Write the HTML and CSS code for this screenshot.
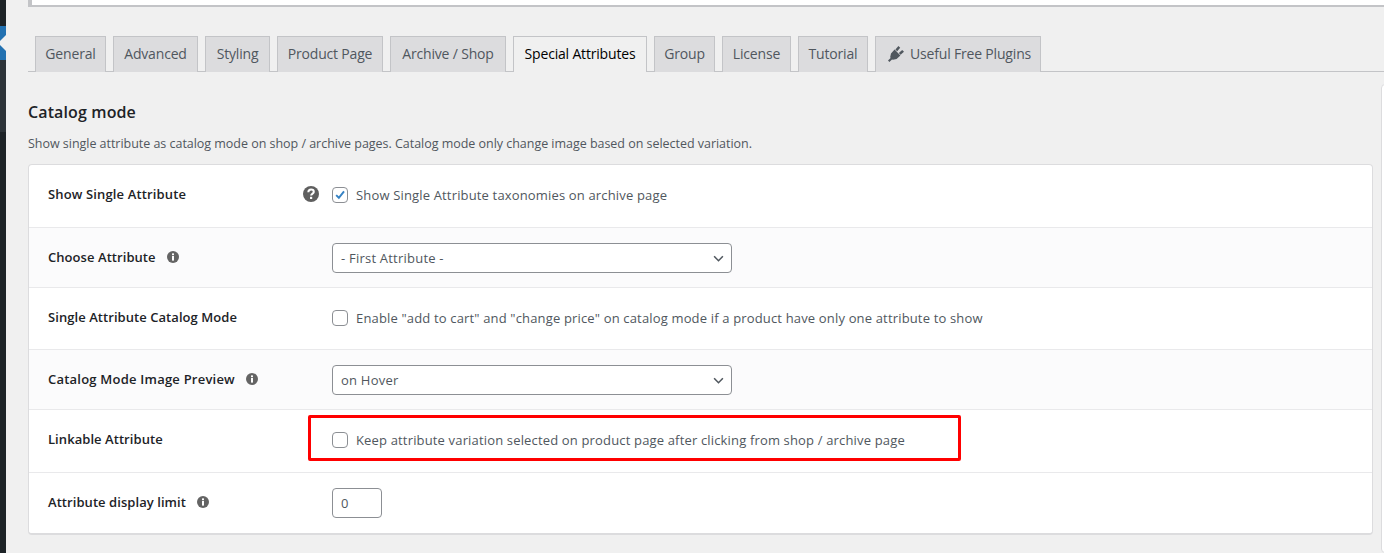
FILE: index.html
```html
<!DOCTYPE html>
<html lang="en">
<head>
<meta charset="utf-8">
<title>Catalog mode</title>
<link rel="stylesheet" href="styles.css">
</head>
<body>
<div class="shell">
  <aside class="adminbar">
    <div class="menu-top"></div>
    <div class="menu-current"><span class="notch"></span></div>
    <div class="menu-sub"></div>
  </aside>
  <main class="content">
    <div class="notice"></div>
    <nav class="tabs">
      <a class="tab tab-general"><span class="tab-text">General</span></a>
      <a class="tab tab-advanced"><span class="tab-text">Advanced</span></a>
      <a class="tab tab-styling"><span class="tab-text">Styling</span></a>
      <a class="tab tab-product"><span class="tab-text">Product Page</span></a>
      <a class="tab tab-archive"><span class="tab-text">Archive / Shop</span></a>
      <a class="tab tab-special active"><span class="tab-text">Special Attributes</span></a>
      <a class="tab tab-group"><span class="tab-text">Group</span></a>
      <a class="tab tab-license"><span class="tab-text">License</span></a>
      <a class="tab tab-tutorial"><span class="tab-text">Tutorial</span></a>
      <a class="tab tab-plugins">
        <svg class="plug" viewBox="0 0 16 16" aria-hidden="true"><path d="M0 14.6 2.6 12 2.2 11 3 7.4 6.6 3.6 12.4 9.4 8.6 13 5 13.8 4 13.4 1.4 16Z"/><path d="M7.4 3.4 10.4 0 12.2 1.8 9.2 5.2Z"/><path d="M10.8 7 14.2 4 16 5.8 12.6 8.8Z"/></svg>
        <span class="tab-text">Useful Free Plugins</span>
      </a>
    </nav>
    <h2 class="section-title">Catalog mode</h2>
    <p class="section-desc">Show single attribute as catalog mode on shop / archive pages. Catalog mode only change image based on selected variation.</p>
    <section class="card">
      <div class="row row-a">
        <div class="label">Show Single Attribute
          <svg class="help" viewBox="0 0 16 16" aria-hidden="true"><circle cx="8" cy="8" r="8"/><path class="glyph-line" d="M5.3 6.2C5.4 4.5 6.6 3.6 8.1 3.6 9.7 3.6 10.8 4.6 10.8 5.9 10.8 7.5 8.1 7.7 8.1 9.6"/><rect class="glyph" x="7" y="10.8" width="2.2" height="2.2"/></svg>
        </div>
        <label class="check"><span class="box"><svg viewBox="0 0 16 16" aria-hidden="true"><path class="tick" d="M3.6 8.2 6.7 11.2 12.6 3.8"/></svg></span>Show Single Attribute taxonomies on archive page</label>
      </div>
      <div class="row row-b alt">
        <div class="label label-tight">Choose Attribute <svg class="info" viewBox="0 0 12 12" aria-hidden="true"><circle cx="6" cy="6" r="6"/><rect class="glyph" x="5" y="2.4" width="2" height="1.8"/><rect class="glyph" x="5" y="5" width="2" height="4.6"/></svg></div>
        <div class="select-wrap">
          <select class="select"><option>- First Attribute -</option></select>
          <svg class="chev" viewBox="0 0 12 8" aria-hidden="true"><path d="M1 1.5 6 6.5 11 1.5"/></svg>
        </div>
      </div>
      <div class="row row-c">
        <div class="label label-tight">Single Attribute Catalog Mode</div>
        <label class="check"><span class="box"></span>Enable "add to cart" and "change price" on catalog mode if a product have only one attribute to show</label>
      </div>
      <div class="row row-b alt">
        <div class="label label-wide">Catalog Mode Image Preview <svg class="info" viewBox="0 0 12 12" aria-hidden="true"><circle cx="6" cy="6" r="6"/><rect class="glyph" x="5" y="2.4" width="2" height="1.8"/><rect class="glyph" x="5" y="5" width="2" height="4.6"/></svg></div>
        <div class="select-wrap">
          <select class="select"><option>on Hover</option></select>
          <svg class="chev" viewBox="0 0 12 8" aria-hidden="true"><path d="M1 1.5 6 6.5 11 1.5"/></svg>
        </div>
      </div>
      <div class="row row-a highlight-row">
        <div class="label label-tight">Linkable Attribute</div>
        <label class="check"><span class="box"></span>Keep attribute variation selected on product page after clicking from shop / archive page</label>
        <div class="highlight"></div>
      </div>
      <div class="row row-last">
        <div class="label label-tight">Attribute display limit <svg class="info" viewBox="0 0 12 12" aria-hidden="true"><circle cx="6" cy="6" r="6"/><rect class="glyph" x="5" y="2.4" width="2" height="1.8"/><rect class="glyph" x="5" y="5" width="2" height="4.6"/></svg></div>
        <input class="number" type="text" value="0">
      </div>
    </section>
  </main>
  <div class="side-card"></div>
</div>
</body>
</html>
```
FILE: styles.css
```css
* { box-sizing: border-box; }
html, body { margin: 0; height: 100%; overflow: hidden; }
body {
  background: #f0f0f0;
  color: #3c434a;
  font-family: "Open Sans", "Noto Sans", "Liberation Sans", sans-serif;
  font-size: 13px;
}
.shell { display: flex; height: 553px; width: 1384px; overflow: hidden; position: relative; }
.adminbar { width: 6px; flex: none; background: #1d2327; display: flex; flex-direction: column; }
.menu-top { height: 26px; }
.menu-current { height: 34px; background: #2271b1; position: relative; }
.notch {
  position: absolute; right: 0; top: 9px; width: 0; height: 0;
  border-style: solid; border-color: transparent #f0f0f0 transparent transparent;
  border-width: 8px 8px 8px 0;
}
.menu-sub { height: 72px; background: #2c3338; }
.content { flex: none; width: 1367px; margin-left: 22px; }
.notice {
  height: 7px; margin-right: -20px;
  background: #fff;
  border-left: 4px solid #c3c4c7;
  border-bottom: 2px solid #c3c4c7;
}
.tabs {
  display: flex; gap: 7px; height: 65px; padding: 29px 0 0 7px; margin-right: -20px;
  border-bottom: 1px solid #c3c4c7;
}
.tab {
  display: flex; align-items: center; justify-content: center; height: 36px; padding-bottom: 2px;
  background: #dcdcde; border: 1px solid #c3c4c7; border-bottom: 0;
  color: #50575e; font-size: 14px; font-weight: 500; white-space: nowrap; letter-spacing: -0.18px;
}
.tab.active { background: #f0f0f0; color: #000; position: relative; }
.tab-general { width: 71px; }
.tab-advanced { width: 85px; }
.tab-styling { width: 65px; }
.tab-product { width: 106px; }
.tab-archive { width: 116px; }
.tab-special { width: 134px; }
.tab-group { width: 61px; }
.tab-license { width: 69px; }
.tab-tutorial { width: 70px; }
.tab-plugins { width: 166px; gap: 6px; justify-content: flex-start; padding-left: 12px; }
.plug { width: 16px; height: 16px; fill: #50575e; flex: none; }
.section-title { margin: 28px 0 0; font-size: 16px; line-height: 24px; font-weight: 600; color: #1d2327; letter-spacing: 0.12px; }
.section-desc { margin: 11px 0 0; font-size: 12.5px; line-height: 18px; color: #50575e; letter-spacing: -0.03px; }
.card {
  margin-top: 11px; width: 1345px;
  background: #fff; border: 1px solid #dcdcde; border-radius: 4px;
  border-bottom-width: 2px;
}
.row {
  display: grid; grid-template-columns: 284px 1fr; align-items: center;
  padding: 0 19px; border-bottom: 1px solid #e9e9eb; position: relative;
}
.row-a { height: 63px; padding-bottom: 2px; }
.row-b { height: 60px; }
.row-c { height: 62px; padding-bottom: 2px; }
.row-last { height: 60px; border-bottom: 0; }
.alt { background: #fbfbfc; }
.label { font-size: 13px; font-weight: 600; color: #1d2327; letter-spacing: 0.14px; display: flex; align-items: center; gap: 11px; padding-bottom: 2px; }
.label-tight { letter-spacing: 0.06px; }
.label-wide { letter-spacing: 0.22px; }
.help { position: absolute; left: 274px; top: 21px; width: 16px; height: 16px; fill: #5f5f5f; }
.info { width: 12px; height: 12px; fill: #646464; flex: none; }
.glyph { fill: #fff; }
.glyph-line { fill: none; stroke: #fff; stroke-width: 2; }
.check { display: flex; align-items: center; gap: 8px; font-size: 13px; color: #50575e; letter-spacing: 0.16px; white-space: nowrap; }
.box {
  width: 16px; height: 16px; flex: none; background: #fff;
  border: 1px solid #8c8f94; border-radius: 4px; display: block;
}
.box svg { display: block; width: 14px; height: 14px; }
.tick { fill: none; stroke: #3582c4; stroke-width: 2.2; }
.select-wrap { position: relative; width: 400px; height: 30px; }
.select {
  appearance: none; width: 100%; height: 30px; padding: 0 24px 0 8px;
  background: #fff; border: 1px solid #8c8f94; border-radius: 4px;
  font: inherit; font-size: 13px; color: #50575e; letter-spacing: 0.22px;
}
.chev { position: absolute; right: 8px; top: 12px; width: 11px; height: 7px; fill: none; stroke: #50575e; stroke-width: 1.8; }
.number {
  width: 50px; height: 30px; padding: 0 8px;
  background: #fff; border: 1px solid #8c8f94; border-radius: 4px;
  font: inherit; font-size: 13px; color: #50575e;
}
.highlight { position: absolute; left: 279px; top: 5px; width: 653px; height: 46px; border: 3px solid #f00; border-radius: 2px; pointer-events: none; }
.side-card { position: absolute; left: 1381px; top: 84px; width: 20px; height: 469px; background: #fff; border: 1px solid #dcdcde; border-radius: 4px; }
```
